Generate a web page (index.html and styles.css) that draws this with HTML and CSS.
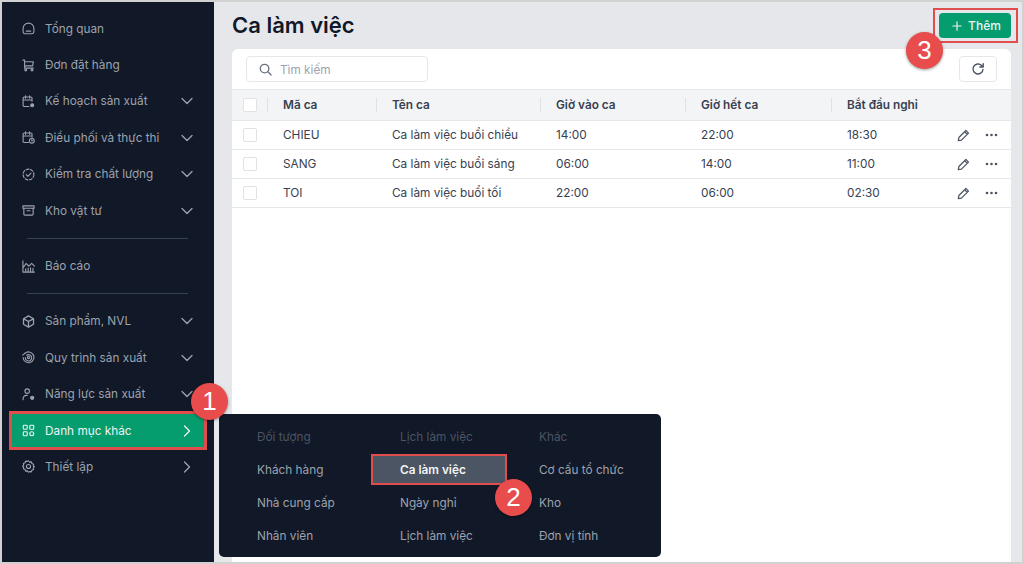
FILE: index.html
```html
<!DOCTYPE html>
<html lang="vi">
<head>
<meta charset="utf-8">
<title>Ca làm việc</title>
<link rel="stylesheet" href="styles.css">
</head>
<body>
<div class="frame">
  <aside class="sidebar">
    <nav class="nav">
      <a class="item"><svg class="ic" viewBox="0 0 14 14"><path d="M1.200 7a5.800 5.800 0 0 1 11.600 0v3.600a2 2 0 0 1-2 2H3.200a2 2 0 0 1-2-2z"/><path d="M4.600 9.800h4.800"/></svg><span class="label">Tổng quan</span></a>
      <a class="item"><svg class="ic" viewBox="0 0 14 14"><path d="M1 1.200h1.800v8.600h9.400M2.800 3h9.400l-.8 4.400H2.800"/><circle cx="4" cy="11.800" r="1"/><circle cx="10.800" cy="11.800" r="1"/></svg><span class="label">Đơn đặt hàng</span></a>
      <a class="item"><svg class="ic" viewBox="0 0 14 14"><path d="M7.500 12.400H2.400a1.200 1.200 0 0 1-1.200-1.200V3.400a1.200 1.200 0 0 1 1.200-1.200h7.200a1.200 1.200 0 0 1 1.200 1.200v3.400M1.200 5.400h9.600M3.800.8v2.600M8.200.8v2.600"/><circle cx="11" cy="11" r="1.600" class="solid"/></svg><span class="label">Kế hoạch sản xuất</span><svg class="chev" viewBox="0 0 12 12"><path d="M1 3.500l5 5 5-5"/></svg></a>
      <a class="item"><svg class="ic" viewBox="0 0 14 14"><path d="M7 12.400H2.400a1.200 1.200 0 0 1-1.200-1.200V3.400a1.200 1.200 0 0 1 1.200-1.200h7.200a1.200 1.200 0 0 1 1.200 1.200v3M1.200 5.400h9.600M3.800.8v2.600M8.200.8v2.600"/><circle cx="10.600" cy="10.400" r="2.600"/><path d="M10.600 9.200v1.300h1"/></svg><span class="label">Điều phối và thực thi</span><svg class="chev" viewBox="0 0 12 12"><path d="M1 3.500l5 5 5-5"/></svg></a>
      <a class="item"><svg class="ic" viewBox="0 0 14 14"><circle cx="7" cy="7" r="5.800" stroke-dasharray="3 1.800"/><path d="M4.600 7.200l1.800 1.700 3.200-3.400"/></svg><span class="label">Kiểm tra chất lượng</span><svg class="chev" viewBox="0 0 12 12"><path d="M1 3.500l5 5 5-5"/></svg></a>
      <a class="item"><svg class="ic" viewBox="0 0 14 14"><path d="M1 2h12v2.600H1zM2 4.600v6.200a1.200 1.200 0 0 0 1.200 1.200h7.600a1.200 1.200 0 0 0 1.200-1.200V4.600M5.400 7.200h3.200"/></svg><span class="label">Kho vật tư</span><svg class="chev" viewBox="0 0 12 12"><path d="M1 3.500l5 5 5-5"/></svg></a>
      <hr class="rule">
      <a class="item"><svg class="ic" viewBox="0 0 14 14"><path d="M1 1v12h12.400M1 8.400l3.400-4.600 3 2.800 3-3 3 3M4 13V9.600M6.600 13V8.600M9.200 13V8.400M11.800 13V9"/></svg><span class="label">Báo cáo</span></a>
      <hr class="rule">
      <a class="item"><svg class="ic" viewBox="0 0 14 14"><path d="M7 1l5.400 3v6L7 13l-5.400-3V4zM1.800 4.200L7 7l5.200-2.800M7 7v5.800" stroke-width="1.400"/></svg><span class="label">Sản phẩm, NVL</span><svg class="chev" viewBox="0 0 12 12"><path d="M1 3.500l5 5 5-5"/></svg></a>
      <a class="item"><svg class="ic" viewBox="0 0 14 14"><path d="M3 2.600A5.800 5.800 0 1 1 1.200 7"/><path d="M5 4.600A3.400 3.400 0 1 1 3.600 7"/><circle cx="7" cy="7" r="1.200"/><path d="M.8 4.400l2.200-1.800"/></svg><span class="label">Quy trình sản xuất</span><svg class="chev" viewBox="0 0 12 12"><path d="M1 3.500l5 5 5-5"/></svg></a>
      <a class="item"><svg class="ic" viewBox="0 0 14 14"><circle cx="5.600" cy="3.400" r="2.400"/><path d="M1.200 12.600v-1.400a3.200 3.200 0 0 1 3.200-3.200h1.200"/><circle cx="11" cy="10.600" r="1.700" class="solid"/></svg><span class="label">Năng lực sản xuất</span><svg class="chev" viewBox="0 0 12 12"><path d="M1 3.500l5 5 5-5"/></svg></a>
      <a class="item active"><svg class="ic" viewBox="0 0 14 14"><rect x="1.400" y="1.400" width="4.200" height="4.200" rx=".8"/><rect x="8.400" y="1.400" width="4.200" height="4.200" rx=".8"/><rect x="1.400" y="8.400" width="4.200" height="4.200" rx=".8"/><circle cx="10.500" cy="10.500" r="2.100"/></svg><span class="label">Danh mục khác</span><svg class="chev" viewBox="0 0 12 12"><path d="M3.500 1l5 5-5 5"/></svg></a>
      <a class="item"><svg class="ic" viewBox="0 0 14 14"><path d="M7 .8l1.200 1.500 1.900-.3.600 1.800 1.800.7-.3 1.900L13.400 7l-1.200 1.400.3 1.900-1.800.7-.6 1.800-1.900-.3L7 13.200l-1.200-1.500-1.900.3-.6-1.800-1.800-.7.3-1.900L.6 7l1.200-1.400-.3-1.900 1.800-.7.6-1.800 1.900.3z"/><circle cx="7" cy="7" r="2.200"/></svg><span class="label">Thiết lập</span><svg class="chev" viewBox="0 0 12 12"><path d="M3.500 1l5 5-5 5"/></svg></a>
    </nav>
  </aside>
  <main class="main">
    <header class="head">
      <h1 class="title">Ca làm việc</h1>
      <button class="add"><svg class="plus" viewBox="0 0 12 12"><path d="M6 1v10M1 6h10"/></svg>Thêm</button>
    </header>
    <section class="card">
      <div class="toolbar">
        <div class="search"><svg class="search-ic" viewBox="0 0 14 14"><circle cx="6" cy="6" r="4.600"/><path d="M9.500 9.500L13 13"/></svg><span class="hint">Tìm kiếm</span></div>
        <button class="refresh"><svg class="refresh-ic" viewBox="0 0 14 14"><path d="M12 7.500A5 5 0 1 1 10.400 3.300L12 4.800M12.200 1.600v3.400H8.800"/></svg></button>
      </div>
      <table class="grid">
        <colgroup><col class="c0"><col class="c1"><col class="c2"><col class="c3"><col class="c4"><col class="c5"><col class="c6"></colgroup>
        <thead>
          <tr>
            <th><span class="check"></span></th>
            <th><span class="th">Mã ca</span></th>
            <th><span class="th">Tên ca</span></th>
            <th><span class="th">Giờ vào ca</span></th>
            <th><span class="th">Giờ hết ca</span></th>
            <th><span class="th">Bắt đầu nghỉ</span></th>
            <th></th>
          </tr>
        </thead>
        <tbody>
          <tr><td><span class="check"></span></td><td>CHIEU</td><td>Ca làm việc buổi chiều</td><td>14:00</td><td>22:00</td><td>18:30</td><td><div class="acts"><svg class="pen" viewBox="0 0 14 14"><path d="M9.600 1.600l2.800 2.800-7.600 7.600-3.400.6.600-3.400zM8.200 3l2.800 2.800"/></svg><svg class="dots" viewBox="0 0 12 4"><circle cx="1.500" cy="2" r="1.300"/><circle cx="6" cy="2" r="1.300"/><circle cx="10.500" cy="2" r="1.300"/></svg></div></td></tr>
          <tr><td><span class="check"></span></td><td>SANG</td><td>Ca làm việc buổi sáng</td><td>06:00</td><td>14:00</td><td>11:00</td><td><div class="acts"><svg class="pen" viewBox="0 0 14 14"><path d="M9.600 1.600l2.800 2.800-7.600 7.600-3.400.6.600-3.400zM8.200 3l2.800 2.800"/></svg><svg class="dots" viewBox="0 0 12 4"><circle cx="1.500" cy="2" r="1.300"/><circle cx="6" cy="2" r="1.300"/><circle cx="10.500" cy="2" r="1.300"/></svg></div></td></tr>
          <tr><td><span class="check"></span></td><td>TOI</td><td>Ca làm việc buổi tối</td><td>22:00</td><td>06:00</td><td>02:30</td><td><div class="acts"><svg class="pen" viewBox="0 0 14 14"><path d="M9.600 1.600l2.800 2.800-7.600 7.600-3.400.6.600-3.400zM8.200 3l2.800 2.800"/></svg><svg class="dots" viewBox="0 0 12 4"><circle cx="1.500" cy="2" r="1.300"/><circle cx="6" cy="2" r="1.300"/><circle cx="10.500" cy="2" r="1.300"/></svg></div></td></tr>
        </tbody>
      </table>
    </section>
  </main>
  <div class="flyout">
    <div class="fh">Đối tượng</div><div class="fh">Lịch làm việc</div><div class="fh">Khác</div>
    <div class="fi">Khách hàng</div><div class="fi on">Ca làm việc</div><div class="fi">Cơ cấu tổ chức</div>
    <div class="fi">Nhà cung cấp</div><div class="fi">Ngày nghỉ</div><div class="fi">Kho</div>
    <div class="fi">Nhân viên</div><div class="fi">Lịch làm việc</div><div class="fi">Đơn vị tính</div>
  </div>
  <div class="badge b1">1</div>
  <div class="badge b2">2</div>
  <div class="badge b3">3</div>
</div>
</body>
</html>
```
FILE: styles.css
```css
* { box-sizing: border-box; }
html, body { margin: 0; height: 100%; overflow: hidden; }
body { font-family: Inter, "Noto Sans", sans-serif; font-size: 11.800px; color: #374151; background: #d1d1d1; }
.frame { position: relative; width: 1024px; height: 564px; border: 2px solid #d1d1d1; display: flex; overflow: hidden; }

.sidebar { width: 212px; flex: none; background: #111827; padding: 8.500px 10px 0; }
.nav { display: flex; flex-direction: column; }
.item { height: 32.400px; margin: 2px 0; display: flex; align-items: center; padding: 0 10px; color: #9ca3af; }
.ic { width: 13px; height: 13px; margin-right: 10px; flex: none; fill: none; stroke: currentColor; stroke-width: 1.200; stroke-linejoin: round; stroke-linecap: round; }
.ic .solid { fill: currentColor; }
.label { flex: 1; white-space: nowrap; }
.chev { width: 12px; height: 12px; flex: none; fill: none; stroke: #9ca3af; stroke-width: 1.300; stroke-linecap: round; stroke-linejoin: round; margin-right: 1px; }
.rule { width: 161px; height: 1px; border: 0; background: #374151; margin: 9px 0 9px 15px; }
.item.active { background: #059d6d; color: #eef2f5; outline: 3px solid #e04d4d; }
.item.active .chev { stroke: #eef2f5; }

.main { flex: 1; min-width: 0; background: #e5e7eb; padding: 0 11px 0 18px; display: flex; flex-direction: column; }
.head { height: 47px; flex: none; display: flex; align-items: center; justify-content: space-between; }
.title { margin: -2px 0 0; font-size: 22px; font-weight: 600; color: #111827; }
.add { position: relative; width: 72px; height: 25px; border: 0; border-radius: 4px; background: #059d6d; color: #eef2f5; font: 500 12px Inter, sans-serif; display: flex; align-items: center; justify-content: center; gap: 6px; padding-left: 9px; }
.add::after { content: ""; position: absolute; inset: -5px -7px -5px -6px; border: 2px solid #e04d4d; }
.plus { width: 10px; height: 10px; fill: none; stroke: currentColor; stroke-width: 1.400; stroke-linecap: round; }

.card { flex: 1; background: #fff; border-radius: 6px 6px 0 0; }
.toolbar { height: 40px; display: flex; align-items: center; justify-content: space-between; padding: 0 14px; }
.search { width: 182px; height: 26px; border: 1px solid #e5e7eb; border-radius: 4px; display: flex; align-items: center; gap: 8px; padding-left: 12px; color: #9ca3af; }
.hint { padding-top: 1px; }
.search-ic { width: 13px; height: 13px; fill: none; stroke: #6b7280; stroke-width: 1.400; stroke-linecap: round; }
.refresh { width: 38px; height: 26px; padding: 0; border: 1px solid #e5e7eb; border-radius: 4px; background: #fff; display: flex; align-items: center; justify-content: center; }
.refresh-ic { width: 14px; height: 14px; fill: none; stroke: #4b5563; stroke-width: 1.400; stroke-linecap: round; stroke-linejoin: round; }

.grid { width: 100%; border-collapse: collapse; table-layout: fixed; }
.c0 { width: 36px; } .c1 { width: 109px; } .c2 { width: 164px; } .c3 { width: 145px; } .c4 { width: 146px; } .c5 { width: 100px; }
.grid th { height: 31px; padding: 0; background: #f3f4f6; border-top: 1px solid #e5e7eb; border-bottom: 1px solid #e5e7eb; text-align: left; font-weight: 600; color: #374151; }
.th { display: block; height: 14px; line-height: 14px; margin-left: -1px; border-left: 1px solid #dfe1e5; padding-left: 15px; }
.grid td { height: 29px; padding: 0 0 0 15px; border-bottom: 1px solid #e5e7eb; white-space: nowrap; }
.grid th:first-child, .grid td:first-child { padding: 0 0 0 11px; }
.check { display: block; width: 14px; height: 14px; border: 1px solid #e0e2e6; border-radius: 2px; background: #fff; }
.acts { display: flex; align-items: center; justify-content: flex-end; gap: 15px; padding-right: 13px; }
.pen { width: 13px; height: 13px; fill: none; stroke: #4b5563; stroke-width: 1.300; stroke-linejoin: round; }
.dots { width: 13px; height: 4px; fill: #4b5563; }

.flyout { position: absolute; left: 217px; top: 412px; width: 442px; height: 143px; background: #111827; border-radius: 5px; padding: 6px 0 0 11px; display: grid; grid-template-columns: 143px 139px 138px; grid-auto-rows: 33px; align-items: center; }
.fh, .fi { padding-left: 27px; color: #9ca3af; white-space: nowrap; }
.fh { color: #4b5563; }
.fi.on { width: 132px; height: 27px; display: flex; align-items: center; background: #4b5563; color: #f3f4f6; font-weight: 600; outline: 2px solid #e04d4d; }

.badge { position: absolute; width: 37px; height: 37px; border-radius: 50%; background: #e84c4c; color: #fff; font: 26px/37px "Liberation Sans", Arial, sans-serif; text-align: center; box-shadow: 0 1px 3px rgba(0,0,0,.4); }
.b1 { left: 189px; top: 381px; }
.b2 { left: 493px; top: 477px; }
.b3 { left: 904px; top: 30px; }
```
